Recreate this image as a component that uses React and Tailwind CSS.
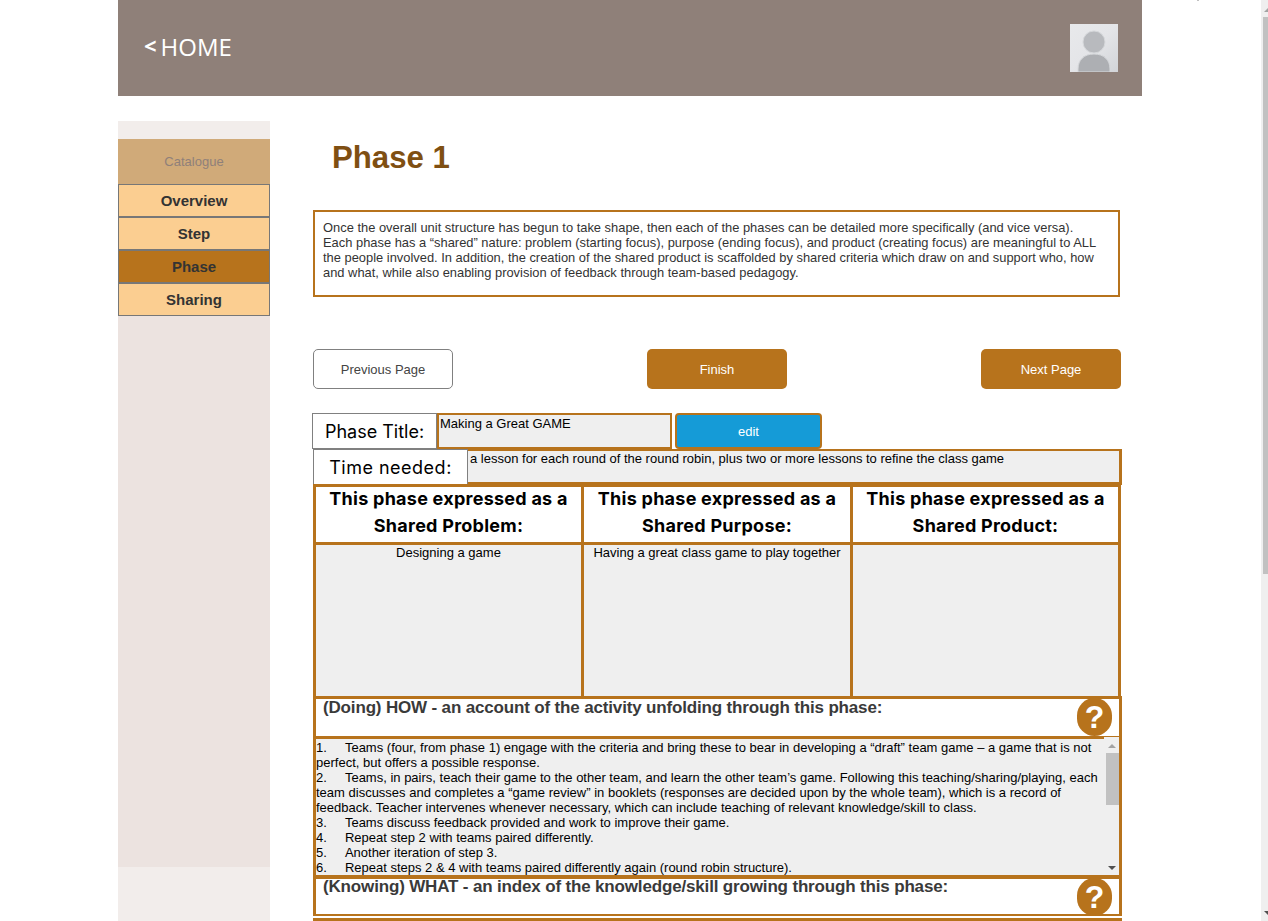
import React from 'react';

const navItems = [
    { label: 'Overview' },
    { label: 'Step' },
    { label: 'Phase', active: true },
    { label: 'Sharing' },
];

const columns = [
    { title: 'Shared Problem:', body: 'Designing a game', boxClass: 'w-[271px] border-l-[3px]' },
    { title: 'Shared Purpose:', body: 'Having a great class game to play together', boxClass: 'w-[269px]' },
    { title: 'Shared Product:', body: '', boxClass: 'w-[268px]' },
];

const steps = [
    '1.\u00a0\u00a0\u00a0\u00a0\u00a0Teams (four, from phase 1) engage with the criteria and bring these to bear in developing a “draft” team game – a game that is not perfect, but offers a possible response.',
    '2.\u00a0\u00a0\u00a0\u00a0\u00a0Teams, in pairs, teach their game to the other team, and learn the other team’s game. Following this teaching/sharing/playing, each team discusses and completes a “game review” in booklets (responses are decided upon by the whole team), which is a record of feedback. Teacher intervenes whenever necessary, which can include teaching of relevant knowledge/skill to class.',
    '3.\u00a0\u00a0\u00a0\u00a0\u00a0Teams discuss feedback provided and work to improve their game.',
    '4.\u00a0\u00a0\u00a0\u00a0\u00a0Repeat step 2 with teams paired differently.',
    '5.\u00a0\u00a0\u00a0\u00a0\u00a0Another iteration of step 3.',
    '6.\u00a0\u00a0\u00a0\u00a0\u00a0Repeat steps 2 & 4 with teams paired differently again (round robin structure).',
];

// Placeholder avatar
function Avatar() {
    return (
        <svg width="48" height="48" viewBox="0 0 48 48">
            <defs>
                <linearGradient id="avatarBg" x1="0" y1="0" x2="1" y2="1">
                    <stop offset="0" stopColor="#e8e9eb" />
                    <stop offset="0.5" stopColor="#e4e5e8" />
                    <stop offset="1" stopColor="#d2d4d8" />
                </linearGradient>
            </defs>
            <rect width="48" height="48" fill="url(#avatarBg)" />
            <circle cx="24" cy="18" r="11" fill="#b8babe" stroke="#d6d8db" strokeWidth="1" />
            <path d="M8 48 V45 C8 36 14 30 24 30 C34 30 40 36 40 45 V48 Z" fill="#adafb3" stroke="#d6d8db" strokeWidth="1" />
        </svg>
    );
}

function HelpBadge() {
    return (
        <div className="relative -mt-px w-[35px] h-[38px] rounded-full bg-[#b7731c] text-white font-bold text-[32px] leading-[38px] text-center shrink-0">
            ?
        </div>
    );
}

function SectionHeading({ children, rowClass, textClass }) {
    return (
        <div className={`${rowClass} -mr-px flex justify-between border-x-[3px] border-[#b7731c] pl-[7px] pr-[7px] bg-white`}>
            <h3 className={`${textClass} text-[17px] leading-[18px] font-bold text-[#3a3a3a] tracking-[-0.16px]`}>{children}</h3>
            <HelpBadge />
        </div>
    );
}

function Sidebar() {
    return (
        <aside className="w-[152px] shrink-0 bg-[#f2edeb] pt-[18px]">
            <div className="h-[728px] bg-[#ece3e0]">
                <div className="h-[45px] bg-[#d0aa79] flex items-center justify-center text-[13px] text-[#8f8079]">Catalogue</div>
                {navItems.map(({ label, active }) => (
                    <div
                        key={label}
                        className={`h-[33px] border border-[#777] pt-px flex items-center justify-center text-[15px] font-bold text-[#333] ${active ? 'bg-[#b7731c]' : 'bg-[#fbce91]'}`}
                    >
                        {label}
                    </div>
                ))}
            </div>
        </aside>
    );
}

function PageScrollbar() {
    return (
        <div className="w-[7px] shrink-0 bg-[#efefef] overflow-hidden flex flex-col">
            <div className="h-[17px] pt-[8px] pl-[3px]">
                <div className="w-0 h-0 border-x-[4px] border-b-[4px] border-x-transparent border-b-[#a3a3a3]" />
            </div>
            <div className="ml-[2px] h-[557px] bg-[#c1c1c1]" />
            <div className="mt-auto mb-[6px] ml-[3px] w-0 h-0 border-x-[4px] border-t-[4px] border-x-transparent border-t-[#505050]" />
        </div>
    );
}

export default function App() {
    return (
        <div className="relative flex h-[921px] overflow-hidden bg-white font-['Liberation_Sans',sans-serif]">
            <div className="absolute top-0 left-[1197px] w-[2px] h-px bg-[#c1c1c1]" />
            <div className="flex-1 pl-[118px]">
                <div className="w-[1024px]">
                    <header className="h-[96px] bg-[#8f8079] flex items-center justify-between pl-[26px] pr-[24px]">
                        <a className="-mt-[2px] text-white text-[24px] font-['Open_Sans',sans-serif] flex items-center gap-[4px]">
                            <span className="font-bold text-[22px] leading-none -mt-[4px]">&lt;</span>
                            HOME
                        </a>
                        <Avatar />
                    </header>

                    <div className="flex mt-[25px]">
                        <Sidebar />

                        <main className="w-[808px] ml-[43px] flex-none">
                            <h1 className="text-[31.2px] leading-[36px] font-bold text-[#7f4f12] pl-[19px] pt-[19px]">Phase 1</h1>

                            <p className="mt-[34px] w-[807px] h-[87px] border-2 border-[#b7731c] pl-[8px] pr-[12px] pt-[8px] text-[12.9px] leading-[15px] text-[#333]">
                                Once the overall unit structure has begun to take shape, then each of the phases can be detailed more specifically (and vice versa). Each phase has a “shared” nature: problem (starting focus), purpose (ending focus), and product (creating focus) are meaningful to ALL the people involved. In addition, the creation of the shared product is scaffolded by shared criteria which draw on and support who, how and what, while also enabling provision of feedback through team-based pedagogy.
                            </p>

                            <div className="mt-[52px] flex justify-between">
                                <button className="w-[140px] h-[40px] pt-px rounded-[5px] border border-[#808080] bg-white text-[13px] text-[#444]">Previous Page</button>
                                <button className="w-[140px] h-[40px] pt-px rounded-[5px] bg-[#b7731c] text-[13px] text-white">Finish</button>
                                <button className="w-[140px] h-[40px] pt-px rounded-[5px] bg-[#b7731c] text-[13px] text-white">Next Page</button>
                            </div>

                            <div className="mt-[24px] h-[36px] flex">
                                <div className="w-[125px] -ml-[1px] border border-[#808080] flex items-center justify-center font-['Inter',sans-serif] text-[18px] text-black">Phase Title:</div>
                                <div className="w-[235px] border-2 border-[#b7731c] bg-[#efefef] px-[1px] pt-px text-[13px] leading-[15px] text-black">Making a Great GAME</div>
                                <button className="w-[147px] ml-[3px] pt-px border-2 border-[#b7731c] rounded-[4px] bg-[#159bd7] text-[13px] text-white">edit</button>
                            </div>

                            <div className="h-[36px] flex -mr-px">
                                <div className="w-[155px] border border-[#808080] flex items-center justify-center font-['Inter',sans-serif] text-[18px] tracking-[0.5px] text-black">Time needed:</div>
                                <div className="flex-1 border-t-2 border-b-[3px] border-r-[3px] border-[#b7731c] bg-[#efefef] text-[13px] leading-[15px] text-black pl-[2px]">a lesson for each round of the round robin, plus two or more lessons to refine the class game</div>
                            </div>

                            <div className="flex -mt-px">
                                {columns.map(col => (
                                    <div key={col.title} className={`${col.boxClass} border-r-[3px] border-[#b7731c]`}>
                                        <div className="h-[58px] border-t-[3px] border-[#b7731c] bg-white text-center font-['Inter',sans-serif] font-bold text-[18px] tracking-[0.25px] leading-[27px] text-black">
                                            <div className="-mt-[2px]">This phase expressed as a</div>
                                            <div>{col.title}</div>
                                        </div>
                                        <div className="h-[154px] border-t-[3px] border-[#b7731c] bg-[#efefef] text-center text-[13px] leading-[15px] text-black">
                                            {col.body}
                                        </div>
                                    </div>
                                ))}
                            </div>

                            <SectionHeading rowClass="h-[40px] border-t-[3px]" textClass="">(Doing) HOW - an account of the activity unfolding through this phase:</SectionHeading>

                            <div className="h-[142px] -mr-px flex border-y-[3px] border-x-[3px] border-[#b7731c] bg-[#efefef]">
                                <div className="flex-1 pr-[6px] pt-px text-[13px] leading-[15px] text-black">
                                    {steps.map(s => <div key={s}>{s}</div>)}
                                </div>
                                <div className="relative -mt-[2px] w-[15px] shrink-0 bg-[#efefef] flex flex-col items-center">
                                    <div className="w-0 h-0 mt-[7px] border-x-[4px] border-b-[4px] border-x-transparent border-b-[#a3a3a3]" />
                                    <div className="self-end w-[13px] h-[52px] mt-[5px] bg-[#c1c1c1]" />
                                    <div className="w-0 h-0 mt-auto mb-[5px] border-x-[4px] border-t-[4px] border-x-transparent border-t-[#505050]" />
                                </div>
                            </div>

                            <SectionHeading rowClass="h-[36px] border-t" textClass="-mt-px">(Knowing) WHAT - an index of the knowledge/skill growing through this phase:</SectionHeading>
                            <div className="-mr-px h-[2px] bg-[#b7731c]" />
                            <div className="-mr-px mt-[2px] h-[3px] bg-[#b7731c]" />
                        </main>
                    </div>
                </div>
            </div>
            <PageScrollbar />
        </div>
    );
}
